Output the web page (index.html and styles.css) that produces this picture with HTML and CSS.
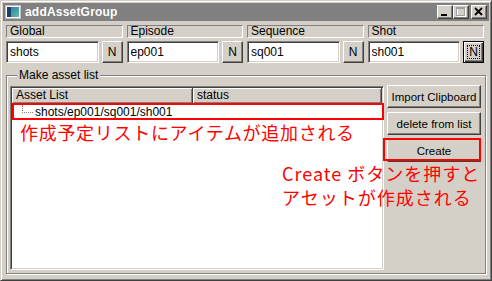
FILE: index.html
```html
<!DOCTYPE html>
<html lang="ja">
<head>
    <meta charset="UTF-8">
    <title>addAssetGroup</title>
    <link rel="stylesheet" href="styles.css">
</head>
<body>
    <div class="window">
        <div class="titlebar">
            <svg class="app-icon" width="16" height="16" viewBox="0 0 16 16">
                <defs>
                    <linearGradient id="ig" x1="0" y1="0" x2="1" y2="1">
                        <stop offset="0" stop-color="#2a6fb0"/>
                        <stop offset="1" stop-color="#5fc0a0"/>
                    </linearGradient>
                </defs>
                <rect x="0.5" y="1.5" width="15" height="13" fill="#fff" stroke="#c0c0c0"/>
                <rect x="2" y="3" width="12" height="10" fill="url(#ig)"/>
                <rect x="2" y="3" width="4" height="10" fill="#1d3f66"/>
            </svg>
            <span class="title">addAssetGroup</span>
            <div class="caption-buttons">
                <span class="cap-btn">
                    <svg width="14" height="12" viewBox="0 0 14 12"><rect x="3" y="8" width="6" height="2" fill="#000"/></svg>
                </span>
                <span class="cap-btn">
                    <svg width="14" height="12" viewBox="0 0 14 12">
                        <rect x="3.5" y="2.5" width="8" height="8" fill="none" stroke="#fff"/>
                        <rect x="2.5" y="1.5" width="8" height="8" fill="none" stroke="#a0a0a0"/>
                        <rect x="2" y="1" width="9" height="2" fill="#a0a0a0"/>
                    </svg>
                </span>
                <span class="cap-btn close">
                    <svg width="14" height="12" viewBox="0 0 14 12"><path d="M3 2 L10 9 M10 2 L3 9" stroke="#000" stroke-width="1.8"/></svg>
                </span>
            </div>
        </div>

        <div class="body">
            <div class="fields">
                <div class="field">
                    <div class="field-label">Global</div>
                    <div class="field-row">
                        <input class="text-input" type="text" value="shots">
                        <button class="btn n-btn">N</button>
                    </div>
                </div>
                <div class="field">
                    <div class="field-label">Episode</div>
                    <div class="field-row">
                        <input class="text-input" type="text" value="ep001">
                        <button class="btn n-btn">N</button>
                    </div>
                </div>
                <div class="field">
                    <div class="field-label">Sequence</div>
                    <div class="field-row">
                        <input class="text-input" type="text" value="sq001">
                        <button class="btn n-btn">N</button>
                    </div>
                </div>
                <div class="field">
                    <div class="field-label">Shot</div>
                    <div class="field-row">
                        <input class="text-input" type="text" value="sh001">
                        <button class="btn n-btn focused">N</button>
                    </div>
                </div>
            </div>

            <fieldset class="group">
                <legend>Make asset list</legend>
                <div class="group-inner">
                    <div class="listview">
                        <div class="lv-header">
                            <div class="lv-col col-name">Asset List</div>
                            <div class="lv-col col-status">status</div>
                        </div>
                        <div class="lv-row"><span class="tree-line"></span>shots/ep001/sq001/sh001</div>
                    </div>
                    <div class="side-buttons">
                        <button class="btn side-btn">Import Clipboard</button>
                        <button class="btn side-btn">delete from list</button>
                        <button class="btn side-btn">Create</button>
                    </div>
                </div>
            </fieldset>
        </div>

        <!-- annotations drawn over the screenshot -->
        <div class="mark mark-row"></div>
        <div class="mark mark-create"></div>
        <div class="note note-list">作成予定リストにアイテムが追加される</div>
        <div class="note note-create">Create ボタンを押すと<br>アセットが作成される</div>
    </div>
</body>
</html>
```

FILE: styles.css
```css
body, html {
    margin: 0;
    background: #d4d0c8;
    font-family: "Liberation Sans", Arial, sans-serif;
    font-size: 12px;
}

.window {
    position: relative;
    width: 492px;
    height: 281px;
    box-sizing: border-box;
    padding: 2px;
    background: #d4d0c8;
    border: 1px solid;
    border-color: #d4d0c8 #404040 #404040 #d4d0c8;
    box-shadow: inset 1px 1px #fff, inset -1px -1px #808080;
    display: flex;
    flex-direction: column;
}

/* title bar */
.titlebar {
    height: 18px;
    background: #808080;
    display: flex;
    align-items: center;
    padding-left: 2px;
    flex-shrink: 0;
}

.app-icon {
    margin-right: 4px;
}

.title {
    color: #fff;
    font-weight: bold;
    font-size: 12px;
    letter-spacing: 0.2px;
}

.caption-buttons {
    margin-left: auto;
    margin-right: 2px;
    display: flex;
}

.cap-btn {
    width: 14px;
    height: 12px;
    background: #d4d0c8;
    border: 1px solid;
    border-color: #fff #404040 #404040 #fff;
    box-shadow: inset -1px -1px #808080;
    display: flex;
}

.cap-btn.close {
    margin-left: 2px;
}

/* content */
.body {
    flex: 1;
    display: flex;
    flex-direction: column;
    padding: 4px 3px 4px 3px;
    min-height: 0;
    min-width: 0;
}

.fields {
    display: grid;
    grid-template-columns: repeat(4, minmax(0, 1fr));
    gap: 4px;
    padding-right: 2px;
}

.field {
    min-width: 0;
}

.field-label {
    height: 11px;
    line-height: 11px;
    padding-left: 3px;
    border: 1px solid;
    border-color: #808080 #fff #fff #808080;
    margin-bottom: 3px;
}

.field-row {
    display: flex;
    gap: 3px;
}

.text-input {
    flex: 1;
    width: 0;
    min-width: 0;
    height: 22px;
    box-sizing: border-box;
    margin: 0;
    padding: 0 3px;
    font: 12px "Liberation Sans", Arial, sans-serif;
    color: #000;
    background: #fff;
    border: 1px solid;
    border-color: #808080 #fff #fff #808080;
    box-shadow: inset 1px 1px #404040, inset -1px -1px #d4d0c8;
    outline: none;
}

.btn {
    margin: 0;
    padding: 0;
    font: 12px "Liberation Sans", Arial, sans-serif;
    color: #000;
    background: #d4d0c8;
    border: 1px solid;
    border-color: #fff #404040 #404040 #fff;
    box-shadow: inset -1px -1px #808080;
}

.n-btn {
    width: 21px;
    height: 22px;
    flex-shrink: 0;
}

.n-btn.focused {
    border-color: #000;
    box-shadow: inset 1px 1px #fff, inset -1px -1px #404040, inset -2px -2px #808080;
    outline: 1px dotted #000;
    outline-offset: -5px;
}

/* group box */
.group {
    flex: 1;
    margin: 5px 0 0 0;
    padding: 4px 4px 3px 3px;
    min-width: 0;
    min-height: 0;
    border: 1px solid #808080;
    box-shadow: inset 1px 1px #fff, 1px 1px #fff;
    display: flex;
    flex-direction: column;
}

.group legend {
    padding: 0 2px;
    margin-left: 7px;
    line-height: 14px;
    background: #d4d0c8;
}

.group-inner {
    flex: 1;
    display: flex;
    gap: 3px;
    min-height: 0;
}

.listview {
    flex: 1;
    background: #fff;
    border: 1px solid;
    border-color: #808080 #fff #fff #808080;
    box-shadow: inset 1px 1px #404040, inset -1px -1px #d4d0c8;
    padding: 1px;
}

.lv-header {
    display: flex;
    height: 16px;
}

.lv-col {
    box-sizing: border-box;
    background: #d4d0c8;
    border-right: 1px solid #404040;
    border-bottom: 1px solid #404040;
    box-shadow: inset 1px 1px #fff, inset -1px -1px #808080;
    padding-left: 4px;
    line-height: 15px;
}

.col-name {
    width: 181px;
}

.col-status {
    flex: 1;
}

.lv-row {
    height: 16px;
    line-height: 16px;
    display: flex;
    align-items: flex-start;
    padding-left: 10px;
}

.tree-line {
    width: 10px;
    height: 7px;
    margin-top: 1px;
    margin-right: 2px;
    border-left: 1px dotted #808080;
    border-bottom: 1px dotted #808080;
}

.side-buttons {
    width: 94px;
    display: flex;
    flex-direction: column;
    gap: 4px;
    margin-top: -1px;
}

.side-btn {
    height: 23px;
    font-size: 11.5px;
}

/* red annotations */
.mark {
    position: absolute;
    box-sizing: border-box;
    border: 2px solid #ff0000;
}

.mark-row {
    left: 11px;
    top: 102px;
    width: 372px;
    height: 17px;
}

.mark-create {
    left: 382px;
    top: 137px;
    width: 98px;
    height: 23px;
}

.note {
    position: absolute;
    color: #ff0000;
    font-family: "Noto Sans CJK JP", "Noto Sans", sans-serif;
    font-size: 18px;
    line-height: 24px;
    white-space: nowrap;
}

.note-list {
    left: 19px;
    top: 119px;
    letter-spacing: 0.7px;
}

.note-create {
    left: 281px;
    top: 160px;
    letter-spacing: 1px;
}
```
